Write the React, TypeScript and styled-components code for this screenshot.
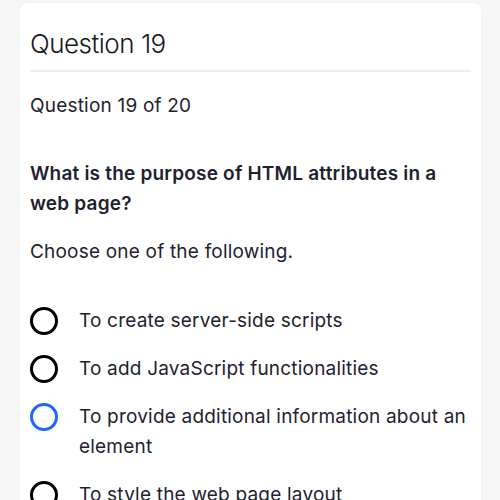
import React from 'react';
import styled, { createGlobalStyle } from 'styled-components';

const GlobalStyle = createGlobalStyle`
  body {
    margin: 0;
    background-color: #f7f7f7;
    font-family: Inter, "Noto Sans", sans-serif;
    color: #1e2230;
  }
`;

const Page = styled.div`
  padding: 3px 19px 0 20px;
`;

const Card = styled.div`
  background-color: #ffffff;
  border-radius: 8px;
  padding: 25px 10px 20px 10px;
  min-height: 520px;
  box-shadow: 0 0 6px rgba(0, 0, 0, 0.03);
`;

const Title = styled.h1`
  margin: 0;
  font-size: 26px;
  font-weight: 300;
  letter-spacing: -0.5px;
  color: #16181f;
  line-height: 32px;
  padding-bottom: 10px;
  border-bottom: 2px solid #eeeeee;
`;

const Counter = styled.div`
  margin-top: 22px;
  font-size: 19px;
  letter-spacing: 0.2px;
  line-height: 24px;
`;

const Prompt = styled.div`
  margin-top: 41px;
  font-size: 19px;
  font-weight: 600;
  letter-spacing: 0.2px;
  line-height: 30px;
`;

const Hint = styled.div`
  margin-top: 18px;
  font-size: 19px;
  letter-spacing: 0.2px;
  line-height: 30px;
`;

const Options = styled.div`
  margin-top: 39px;
  display: flex;
  flex-direction: column;
  gap: 18px;
`;

const Option = styled.label`
  display: flex;
  align-items: flex-start;
  gap: 21px;
  font-size: 19px;
  letter-spacing: 0.2px;
  line-height: 30px;
  cursor: pointer;
`;

const Radio = styled.span<{ $focused?: boolean }>`
  flex: none;
  width: 28px;
  height: 28px;
  margin-top: 1px;
  box-sizing: border-box;
  border-radius: 50%;
  border: 3px solid ${(p) => (p.$focused ? '#1f68ff' : '#000000')};
`;

const answers = [
  { text: 'To create server-side scripts' },
  { text: 'To add JavaScript functionalities' },
  { text: 'To provide additional information about an element', focused: true },
  { text: 'To style the web page layout' },
];

function App() {
  return (
    <Page>
      <GlobalStyle />
      <Card>
        <Title>Question 19</Title>
        <Counter>Question 19 of 20</Counter>
        <Prompt>What is the purpose of HTML attributes in a web page?</Prompt>
        <Hint>Choose one of the following.</Hint>
        <Options>
          {answers.map((a) => (
            <Option key={a.text}>
              <Radio $focused={a.focused} />
              <span>{a.text}</span>
            </Option>
          ))}
        </Options>
      </Card>
    </Page>
  );
}

export default App;
